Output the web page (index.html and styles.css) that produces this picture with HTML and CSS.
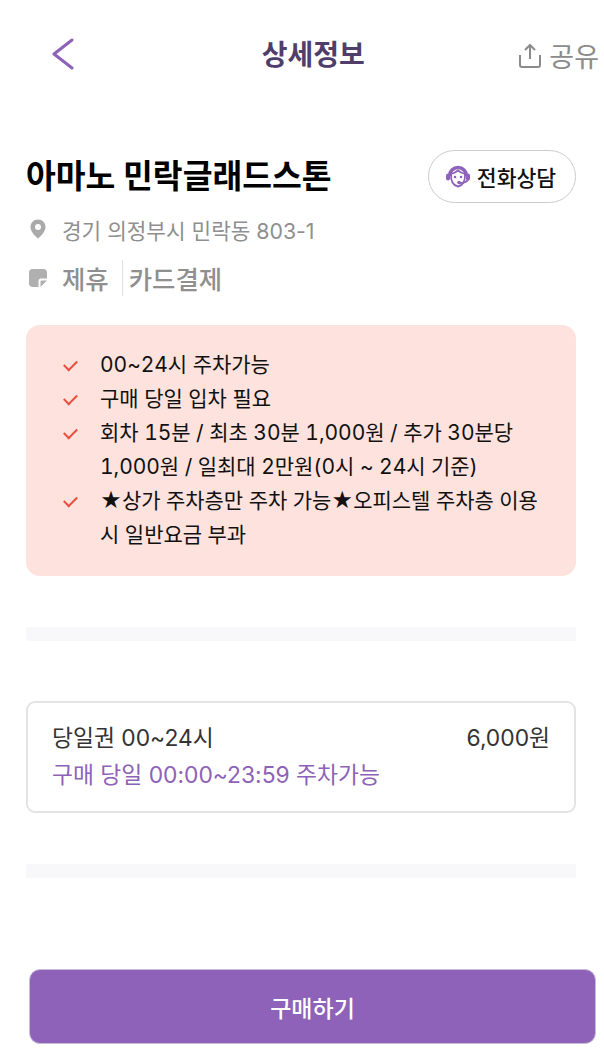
FILE: index.html
```html
<!DOCTYPE html>
<html lang="ko">
<head>
    <meta charset="UTF-8">
    <meta name="viewport" content="width=device-width, initial-scale=1.0">
    <title>상세정보</title>
    <link rel="stylesheet" href="styles.css">
</head>
<body>
    <header class="top-bar">
        <svg class="back-icon" width="24" height="32" viewBox="0 0 24 32"><path d="M21 2 L3 16 L21 30" fill="none" stroke="#8d62b8" stroke-width="3" stroke-linecap="round" stroke-linejoin="round"/></svg>
        <h1 class="page-title">상세정보</h1>
        <div class="share">
            <svg width="24" height="26" viewBox="0 0 24 26"><path d="M12 17 V3 M7 8 L12 3 L17 8 M2 13 V23 Q2 25 4 25 H20 Q22 25 22 23 V13" fill="none" stroke="#8b8b8b" stroke-width="2"/></svg>
            <span>공유</span>
        </div>
    </header>

    <section class="info">
        <div class="title-row">
            <h2 class="lot-name">아마노 민락글래드스톤</h2>
            <button class="call-btn">
                <svg width="24" height="23" viewBox="0 0 24 23">
                    <path d="M3.500 11 A8.500 8.500 0 0 1 20.500 11" fill="none" stroke="#8d62b8" stroke-width="3.500"/>
                    <rect x="0" y="8.500" width="4" height="7" rx="2" fill="#8d62b8"/>
                    <rect x="20" y="8.500" width="4" height="7" rx="2" fill="#8d62b8"/>
                    <path d="M5 9 Q9 8 12 5.500 Q15 8 19 9 Q19.500 20 12 21.500 Q4.500 20 5 9 Z" fill="#fff" stroke="#8d62b8" stroke-width="1.800"/>
                    <circle cx="9" cy="12" r="1.300" fill="#8d62b8"/>
                    <circle cx="15" cy="12" r="1.300" fill="#8d62b8"/>
                    <path d="M22 15 Q20 18 13 18" fill="none" stroke="#8d62b8" stroke-width="2"/>
                    <circle cx="13" cy="17.500" r="1.800" fill="#8d62b8"/>
                </svg>
                전화상담
            </button>
        </div>
        <div class="address">
            <svg width="16" height="20" viewBox="0 0 16 20"><path d="M8 0.500 C3.600 0.500 0.500 3.800 0.500 8 C0.500 12.500 5 17 8 19.500 C11 17 15.500 12.500 15.500 8 C15.500 3.800 12.400 0.500 8 0.500 Z M8 5 A3 3 0 1 1 8 11 A3 3 0 0 1 8 5 Z" fill="#aaaaaa" fill-rule="evenodd"/></svg>
            <span>경기 의정부시 민락동 803-1</span>
        </div>
        <div class="tags">
            <svg width="18" height="18" viewBox="0 0 18 18"><path d="M3.500 0 H14.500 C16.500 0 18 1.500 18 3.500 V9.500 H12 C10.500 9.500 9.500 10.500 9.500 12 V18 H3.500 C1.500 18 0 16.500 0 14.500 V3.500 C0 1.500 1.500 0 3.500 0 Z M11.500 18 V12.500 C11.500 12 12 11.500 12.500 11.500 H18 Z" fill="#b0b0b0"/></svg>
            <span class="tag">제휴</span>
            <span class="tag tag-card">카드결제</span>
        </div>
    </section>

    <ul class="notice">
        <li>00~24시 주차가능</li>
        <li>구매 당일 입차 필요</li>
        <li>회차 15분 / 최초 30분 1,000원 / 추가 30분당 1,000원 / 일최대 2만원(0시 ~ 24시 기준)</li>
        <li>★상가 주차층만 주차 가능★오피스텔 주차층 이용 시 일반요금 부과</li>
    </ul>

    <div class="divider"></div>

    <div class="ticket">
        <div class="ticket-row">
            <span>당일권 00~24시</span>
            <span>6,000원</span>
        </div>
        <p class="ticket-time">구매 당일 00:00~23:59 주차가능</p>
    </div>

    <div class="divider divider-low"></div>

    <button class="buy-btn">구매하기</button>
</body>
</html>
```

FILE: styles.css
```css
* {
    box-sizing: border-box;
}

body {
    font-family: Inter, 'Noto Sans CJK KR', sans-serif;
    margin: 0;
    height: 1056px;
    overflow: hidden;
    background: #fff;
    color: #000;
}

.top-bar {
    height: 108px;
    padding: 38px 5px 0 51px;
    display: flex;
    justify-content: space-between;
    align-items: flex-start;
}

.page-title {
    margin: 0 0 0 33px;
    font-size: 28px;
    line-height: 34px;
    font-weight: 700;
    color: #4f3d6b;
}

.share {
    display: flex;
    align-items: center;
    gap: 7px;
    height: 34px;
    font-size: 27px;
    color: #8b8b8b;
}

.info {
    padding: 0 28px 0 26px;
    margin-top: 42px;
}

.title-row {
    display: flex;
    justify-content: space-between;
    align-items: center;
}

.lot-name {
    margin: 0;
    font-size: 32.400px;
    line-height: 50px;
    font-weight: 700;
}

.call-btn {
    width: 148px;
    height: 53px;
    display: flex;
    align-items: center;
    justify-content: center;
    gap: 7px;
    padding: 0 2px 0 0;
    background: #fff;
    border: 1px solid #cccccc;
    border-radius: 27px;
    font-family: inherit;
    font-size: 21.600px;
    font-weight: 500;
    color: #111;
}

.address {
    display: flex;
    align-items: center;
    gap: 16px;
    margin-top: 11px;
    padding-left: 4px;
    height: 30px;
    font-size: 21.300px;
    color: #8f8f8f;
}

.tags {
    display: flex;
    align-items: center;
    margin-top: 19px;
    padding-left: 3px;
    height: 30px;
    font-size: 25.400px;
    color: #8f8f8f;
}

.tag {
    margin-left: 15px;
    font-weight: 500;
}

.tag-card {
    margin-left: 13px;
    padding-left: 6px;
    border-left: 1px solid #e2e2e2;
}

.notice {
    list-style: none;
    margin: 32px 28px 0 26px;
    padding: 23px 30px 24px 36px;
    background: #fde2dd;
    border-radius: 14px;
    font-size: 21px;
    line-height: 34px;
    letter-spacing: -0.050px;
    font-variant-numeric: tabular-nums;
    color: #111;
}

.notice li {
    position: relative;
    padding-left: 38px;
}

.notice li::before {
    content: "";
    position: absolute;
    left: 2px;
    top: 12px;
    width: 11px;
    height: 6px;
    border-left: 2.500px solid #e8503f;
    border-bottom: 2.500px solid #e8503f;
    transform: rotate(-45deg);
}

.divider {
    height: 14px;
    margin: 51px 28px 0 26px;
    background: #f8f8fb;
}

.ticket {
    height: 112px;
    margin: 60px 28px 0 26px;
    padding: 18px 24px;
    border: 2px solid #e4e4e4;
    border-radius: 9px;
    font-size: 22.800px;
    line-height: 34px;
    color: #333;
}

.ticket-row {
    display: flex;
    justify-content: space-between;
}

.ticket-time {
    margin: 3px 0 0;
    color: #8d62b8;
}

.divider-low {
    margin-top: 51px;
}

.buy-btn {
    display: block;
    width: 567px;
    height: 75px;
    margin: 91px 0 0 29px;
    background: #8d62b8;
    border: 1px solid #c9bcd6;
    border-radius: 11px;
    font-family: inherit;
    font-size: 23px;
    font-weight: 500;
    color: #fff;
}
```
